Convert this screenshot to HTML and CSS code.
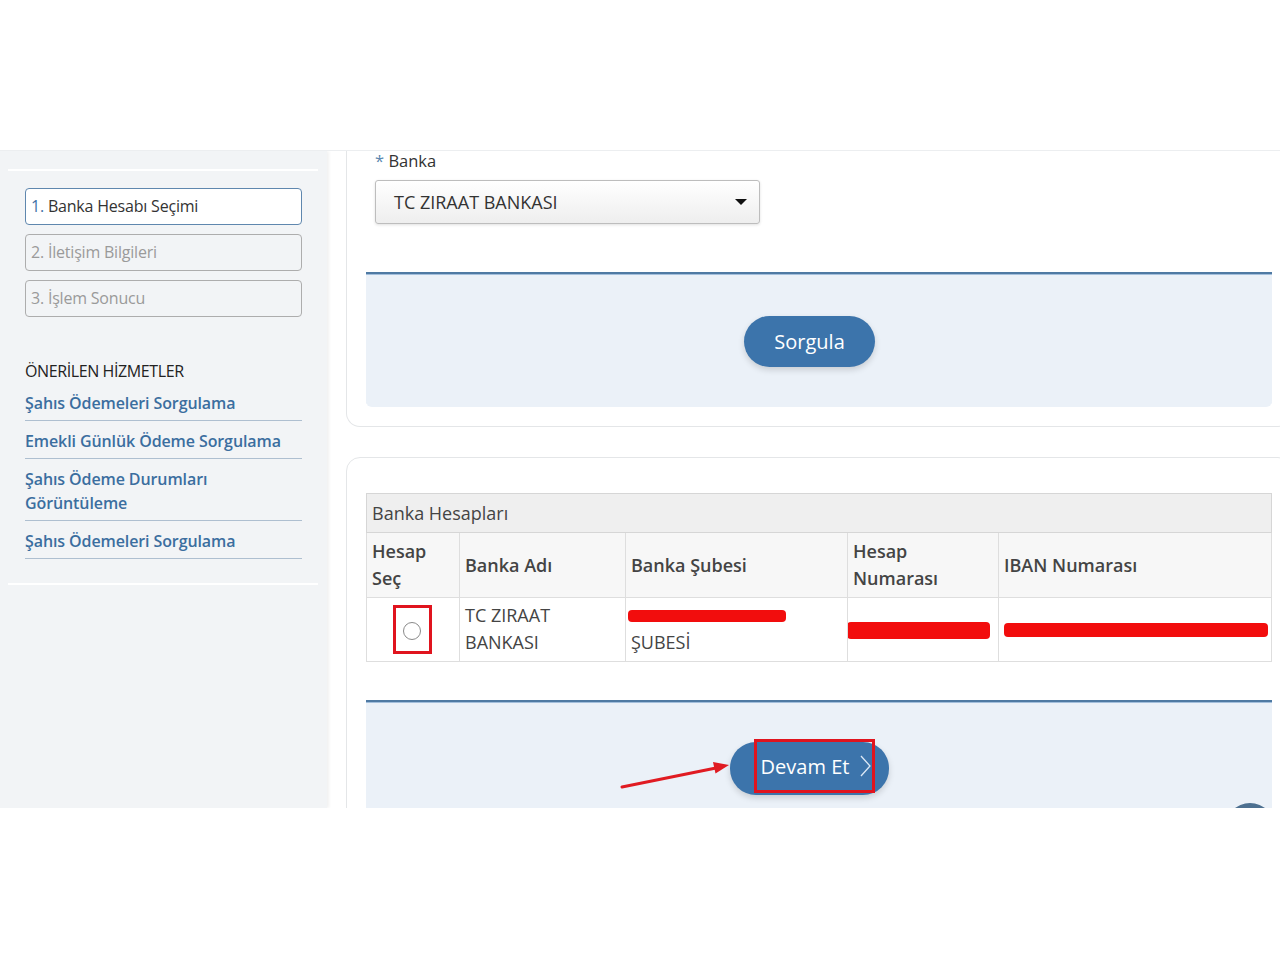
FILE: index.html
```html
<!DOCTYPE html>
<html lang="tr">
<head>
    <meta charset="UTF-8">
    <meta name="viewport" content="width=device-width, initial-scale=1.0">
    <title>Banka Hesabı Seçimi</title>
    <link rel="stylesheet" href="styles.css">
</head>
<body>
    <div class="frame">
        <!-- Sidebar -->
        <aside class="sidebar">
            <div class="rule"></div>
            <ol class="steps">
                <li class="step active"><span class="num">1.</span> Banka Hesabı Seçimi</li>
                <li class="step">2. İletişim Bilgileri</li>
                <li class="step">3. İşlem Sonucu</li>
            </ol>
            <h4 class="services-title">ÖNERİLEN HİZMETLER</h4>
            <ul class="services">
                <li><a href="#">Şahıs Ödemeleri Sorgulama</a></li>
                <li><a href="#">Emekli Günlük Ödeme Sorgulama</a></li>
                <li><a href="#">Şahıs Ödeme Durumları Görüntüleme</a></li>
                <li><a href="#">Şahıs Ödemeleri Sorgulama</a></li>
            </ul>
            <div class="rule"></div>
        </aside>

        <!-- Main -->
        <main class="main">
            <section class="card card-query">
                <label class="field-label"><span class="req">*</span> Banka</label>
                <div class="select">
                    <span>TC ZIRAAT BANKASI</span>
                    <span class="caret"></span>
                </div>
                <div class="action-panel">
                    <button class="btn">Sorgula</button>
                </div>
            </section>

            <section class="card card-accounts">
                <table class="accounts">
                    <colgroup>
                        <col style="width: 93px">
                        <col style="width: 166px">
                        <col style="width: 222px">
                        <col style="width: 151px">
                        <col style="width: 273px">
                    </colgroup>
                    <thead>
                        <tr><th class="caption" colspan="5">Banka Hesapları</th></tr>
                        <tr class="head">
                            <th>Hesap Seç</th>
                            <th>Banka Adı</th>
                            <th>Banka Şubesi</th>
                            <th>Hesap Numarası</th>
                            <th>IBAN Numarası</th>
                        </tr>
                    </thead>
                    <tbody>
                        <tr>
                            <td class="pick"><span class="mark-box"><span class="radio"></span></span></td>
                            <td>TC ZIRAAT BANKASI</td>
                            <td><span class="redact redact-branch"></span>ŞUBESİ</td>
                            <td class="cell-bar"><span class="redact redact-account"></span></td>
                            <td class="cell-bar"><span class="redact redact-iban"></span></td>
                        </tr>
                    </tbody>
                </table>

                <div class="action-panel action-panel-next">
                    <svg class="pointer" width="120" height="40" viewBox="0 0 120 40">
                        <line x1="6" y1="30" x2="100" y2="11" stroke="#e01b22" stroke-width="3" stroke-linecap="round"/>
                        <polygon points="113,8 99.5,16.5 97,5" fill="#e01b22"/>
                    </svg>
                    <button class="btn btn-next">
                        <span class="mark">Devam Et
                            <svg width="11" height="22" viewBox="0 0 11 22"><polyline points="1,1 10,11 1,21" fill="none" stroke="#dce8f5" stroke-width="1.3"/></svg>
                        </span>
                    </button>
                </div>
            </section>
        </main>

        <span class="to-top"></span>
    </div>
</body>
</html>
```

FILE: styles.css
```css
body {
    margin: 0;
    background-color: #ffffff;
    font-family: "Open Sans", "Noto Sans", sans-serif;
    color: #333;
}
.frame {
    position: relative;
    margin-top: 150px;
    height: 657px;
    border-top: 1px solid #eceef0;
    display: flex;
    overflow: hidden;
}

/* sidebar */
.sidebar {
    flex: 0 0 327px;
    padding: 0 8px 0 8px;
    background-color: #f2f4f6;
    box-shadow: 2px 0 3px rgba(0, 0, 0, 0.06);
    height: 657px;
    box-sizing: border-box;
}
.sidebar .rule {
    height: 2px;
    background-color: #ffffff;
    margin: 18px 1px 0 0;
}
.steps {
    list-style: none;
    margin: 17px 17px 0;
    padding: 0;
    display: flex;
    flex-direction: column;
    gap: 9px;
}
.step {
    height: 35px;
    line-height: 35px;
    padding-left: 5px;
    border: 1px solid #adadad;
    border-radius: 4px;
    font-size: 16px;
    color: #9a9a9a;
    letter-spacing: -0.2px;
}
.step.active {
    background-color: #ffffff;
    border-color: #5f87ae;
    color: #333;
}
.step .num {
    color: #3f72a6;
}
.services-title {
    margin: 44px 17px 0;
    font-size: 16px;
    line-height: 20px;
    font-weight: normal;
    color: #222;
    letter-spacing: -0.4px;
}
.services {
    list-style: none;
    margin: 2px 17px 24px;
    padding: 0;
}
.services li {
    padding: 8px 0 5px;
    border-bottom: 1px solid #aebfd0;
    line-height: 24px;
}
.services a {
    color: #3b6e9f;
    font-size: 16px;
    font-weight: 600;
    text-decoration: none;
    letter-spacing: -0.1px;
}

/* main */
.main {
    flex: 0 0 973px;
}
.card {
    margin: 0 9px 0 19px;
    padding: 0 19px 19px;
    background-color: #ffffff;
    border: 1px solid #e4e6e8;
    border-radius: 14px;
}
.card-query {
    border-top: none;
    border-radius: 0 0 14px 14px;
}
.field-label {
    display: block;
    margin-left: 9px;
    font-size: 16.5px;
    line-height: 20px;
    color: #333;
}
.field-label .req {
    color: #5b87b0;
}
.select {
    margin: 9px 0 0 9px;
    width: 385px;
    height: 44px;
    box-sizing: border-box;
    padding: 0 12px 0 18px;
    display: flex;
    align-items: center;
    justify-content: space-between;
    border: 1px solid #bdbdbd;
    border-radius: 3px;
    background: linear-gradient(#ffffff, #eeeeee);
    box-shadow: 0 1px 3px rgba(0, 0, 0, 0.12);
    font-size: 18px;
    color: #333;
}
.caret {
    width: 0;
    height: 0;
    border-left: 6px solid transparent;
    border-right: 6px solid transparent;
    border-top: 6px solid #111;
}
.action-panel {
    position: relative;
    margin-top: 48px;
    padding: 42px 19px 40px 0;
    display: flex;
    justify-content: center;
    background-color: #ebf1f8;
    border-top: 2px solid #4f7aa3;
    box-shadow: inset 0 1px 0 #a3bfdc;
    border-radius: 0 0 6px 6px;
}
.btn {
    height: 51px;
    padding: 0 30px;
    border: none;
    border-radius: 26px;
    background-color: #3c74ab;
    color: #ffffff;
    font-family: "Open Sans", "Noto Sans", sans-serif;
    font-size: 20px;
    box-shadow: 0 3px 6px rgba(0, 0, 0, 0.15);
    cursor: pointer;
}

/* accounts table */
.card-accounts {
    margin-top: 30px;
    padding-top: 35px;
}
.accounts {
    width: 905px;
    border-collapse: collapse;
    table-layout: fixed;
    font-size: 18px;
    color: #444;
}
.accounts th,
.accounts td {
    border: 1px solid #dedede;
    padding: 5px;
    line-height: 27px;
    text-align: left;
    vertical-align: middle;
}
.accounts .caption {
    height: 28px;
    background-color: #efefef;
    font-weight: normal;
    border-color: #d6d6d6;
}
.accounts .head th {
    height: 54px;
    background-color: #f7f7f7;
    font-weight: 600;
}
.accounts td {
    height: 53px;
    background-color: #ffffff;
    color: #444;
    padding-top: 4px;
}
.accounts .pick {
    text-align: center;
}
.mark-box {
    display: inline-flex;
    align-items: center;
    justify-content: center;
    width: 33px;
    height: 43px;
    border: 3px solid #e0141e;
    margin-left: -2px;
}
.radio {
    width: 16px;
    height: 16px;
    margin-top: 3px;
    border: 1.5px solid #8a8a8a;
    border-radius: 50%;
}
.redact {
    display: block;
    background-color: #f20d0d;
    border-radius: 4px;
}
.redact-branch {
    width: 158px;
    height: 12px;
    margin: 8px 0 7px -3px;
}
.accounts .cell-bar {
    padding-left: 0;
    padding-right: 0;
}
.redact-account {
    width: 143px;
    height: 17px;
    margin-left: -1px;
    margin-top: 2px;
}
.redact-iban {
    width: 264px;
    height: 14px;
    margin-left: 5px;
    margin-top: 2px;
}

/* next */
.action-panel-next {
    margin-top: 38px;
    padding-top: 40px;
    padding-bottom: 60px;
}
.pointer {
    position: absolute;
    left: 250px;
    top: 55px;
}
.btn-next {
    height: 53px;
    padding: 0 14px 0 24px;
    display: flex;
    align-items: flex-start;
}
.btn-next .mark {
    display: inline-flex;
    align-items: center;
    gap: 11px;
    height: 48px;
    margin-top: -3px;
    padding: 0 1px 0 4px;
    border: 3px solid #e0141e;
}
.to-top {
    position: absolute;
    right: 5px;
    bottom: -45px;
    width: 50px;
    height: 50px;
    border-radius: 50%;
    background-color: #4d7090;
}
```
